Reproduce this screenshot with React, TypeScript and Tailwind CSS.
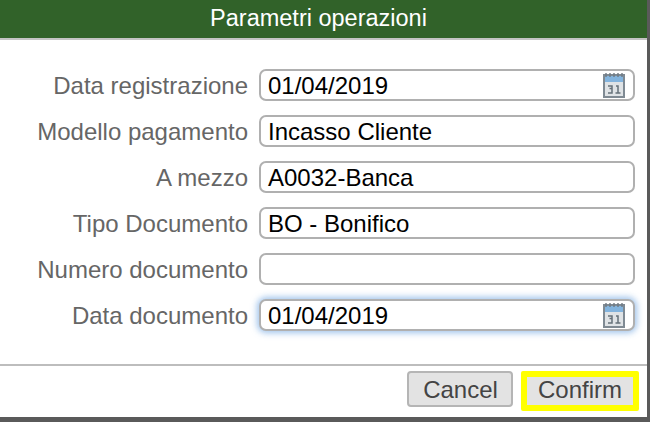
const rows = [
  { label: "Data registrazione", value: "01/04/2019", cal: true },
  { label: "Modello pagamento", value: "Incasso Cliente" },
  { label: "A mezzo", value: "A0032-Banca" },
  { label: "Tipo Documento", value: "BO - Bonifico" },
  { label: "Numero documento", value: "" },
  { label: "Data documento", value: "01/04/2019", cal: true, focus: true },
];

function Cal() {
  return (
    <svg width="22" height="26" viewBox="0 0 22 26" className="shrink-0">
      <rect x="0" y="2" width="22" height="24" fill="#7f8a93" />
      <rect x="2" y="4" width="18" height="6" fill="#83b4de" />
      <rect x="2" y="10" width="18" height="14" fill="#dfe3e6" />
      <path d="M3 1v4M7 1v4M11 1v4M15 1v4M19 1v4" stroke="#6f7a83" strokeWidth="1.4" />
      <path d="M5 14h4v2.500H6.500M9 16.500v4.500H5M13 14h2v7M12.500 21h5" fill="none" stroke="#66717a" strokeWidth="1.5" />
    </svg>
  );
}

export default function App() {
  return (
    <div className="w-[650px] h-[422px] bg-[#5a5a5a] overflow-hidden font-['Liberation_Sans',Arial,sans-serif]">
      <div className="w-[647px] h-[417px] bg-white flex flex-col">
        <div className="h-[40px] shrink-0 bg-[#316229] border-b-2 border-[#c4c4c4] text-white text-[23.5px] leading-none flex items-center justify-center pr-[10px]">
          Parametri operazioni
        </div>
        <div className="h-[326px] shrink-0 border-b-2 border-[#bdbdbd] pt-[29px] flex flex-col gap-[14px]">
          {rows.map((r) => (
            <div key={r.label} className="flex items-center h-[32px]">
              <div className="w-[248px] shrink-0 text-right text-[24px] text-[#666666] leading-none pt-[2px]">{r.label}</div>
              <div
                className={
                  "ml-[11px] w-[376px] h-[32px] bg-white border-2 border-[#b0b0b0] rounded-[7px] flex items-center justify-between pl-[7px] pr-[8px] text-[24px] text-black leading-none" +
                  (r.focus ? " shadow-[0_0_6px_2px_rgba(110,165,225,0.65)]" : "")
                }
              >
                <span className="pt-[2px]">{r.value}</span>
                {r.cal && <Cal />}
              </div>
            </div>
          ))}
        </div>
        <div className="flex-1 flex items-start justify-end pt-[5px] pr-[8px] gap-[8px]">
          <button className="w-[106px] h-[36px] bg-[#e3e3e3] border-2 border-[#b5b5b5] rounded-[4px] text-[24px] text-[#444444] leading-none pt-[2px] pl-[1px]">
            Cancel
          </button>
          <button className="w-[118px] h-[40px] bg-[#e3e3e3] border-[6px] border-[#ffff00] rounded-[2px] text-[24px] text-[#444444] leading-none pb-[2px]">
            Confirm
          </button>
        </div>
      </div>
    </div>
  );
}
